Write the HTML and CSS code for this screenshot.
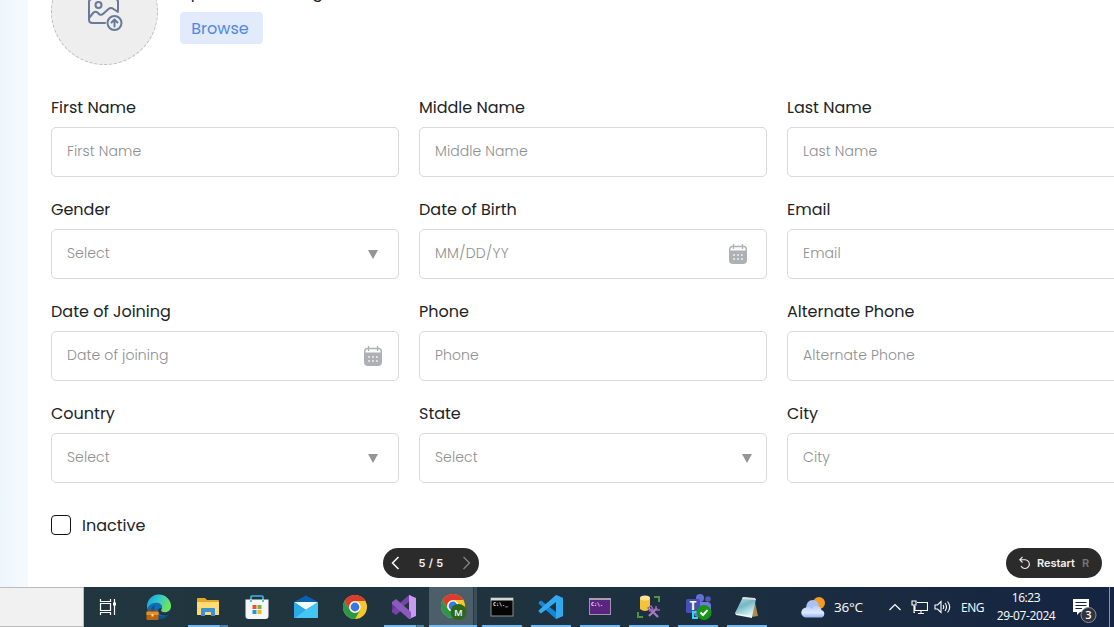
FILE: index.html
```html
<!DOCTYPE html>
<html lang="en">
<head>
<meta charset="utf-8">
<title>Employee form</title>
<link rel="stylesheet" href="styles.css">
</head>
<body>
<div class="screen">
  <div class="viewport">
    <aside class="rail"></aside>
    <main class="form">
      <section class="upload">
        <div class="avatar">
          <svg width="36" height="38" viewBox="0 0 36 38" fill="none" stroke="#69799b" stroke-width="2" stroke-linecap="round" stroke-linejoin="round">
            <path d="M18 30H5.500Q2 30 2 26.500V9Q2 6 5 6H28.500Q31 6 31 9V17.500"/>
            <circle cx="11.500" cy="12" r="3"/>
            <path d="M2 25L6.500 19.500Q8.500 18 10.500 19.500L12.500 21.500Q14.500 22.500 16.500 20.500L21.500 16Q24 14 26.500 16L31 19"/>
            <circle cx="27.500" cy="30" r="7"/>
            <path d="M27.500 33.500V27M24.500 29.500L27.500 26.500L30.500 29.500"/>
          </svg>
        </div>
        <div class="upload-info">
          <span class="upload-title">Upload User Image</span>
          <span class="browse">Browse</span>
        </div>
      </section>
      <section class="fields">
        <div class="field"><label>First Name</label><div class="box"><span>First Name</span></div></div>
        <div class="field"><label>Middle Name</label><div class="box"><span>Middle Name</span></div></div>
        <div class="field"><label>Last Name</label><div class="box"><span>Last Name</span></div></div>
        <div class="field"><label>Gender</label><div class="box"><span>Select</span><i class="caret"></i></div></div>
        <div class="field"><label>Date of Birth</label><div class="box"><span class="caps">MM/DD/YY</span><svg class="cal" viewBox="0 0 20 22"><use href="#calendar"/></svg></div></div>
        <div class="field"><label>Email</label><div class="box"><span>Email</span></div></div>
        <div class="field"><label>Date of Joining</label><div class="box wide-end"><span>Date of joining</span><svg class="cal" viewBox="0 0 20 22"><use href="#calendar"/></svg></div></div>
        <div class="field"><label>Phone</label><div class="box"><span>Phone</span></div></div>
        <div class="field"><label>Alternate Phone</label><div class="box"><span>Alternate Phone</span></div></div>
        <div class="field"><label>Country</label><div class="box"><span>Select</span><i class="caret"></i></div></div>
        <div class="field"><label>State</label><div class="box tight-end"><span>Select</span><i class="caret"></i></div></div>
        <div class="field"><label>City</label><div class="box"><span>City</span></div></div>
      </section>
      <div class="inactive"><span class="check"></span><label>Inactive</label></div>
    </main>
    <div class="pill pager">
      <svg width="10" height="14" viewBox="0 0 10 14" fill="none" stroke="#fff" stroke-width="1.5"><path d="M7.500 1L1.500 7L7.500 13"/></svg>
      <span>5 / 5</span>
      <svg width="10" height="14" viewBox="0 0 10 14" fill="none" stroke="#858585" stroke-width="1.300"><path d="M2.500 1L8.500 7L2.500 13"/></svg>
    </div>
    <div class="pill restart">
      <svg width="12" height="14" viewBox="0 0 12 14" fill="none" stroke="#eee" stroke-width="1.100"><path d="M3.500 1L.800 3.700L3.500 6.500M1 3.700H6.500A4.400 4.400 0 1 1 2 10"/></svg>
      <span>Restart</span><span class="key">R</span>
    </div>
  </div>

  <footer class="taskbar">
    <div class="start-box"></div>
    <div class="apps">
      <div class="app view"><svg width="18" height="18" viewBox="0 0 18 18" fill="none" stroke="#fff" stroke-width="1.200"><path d="M1.500 1V3.500H11.500V1M1.500 17V14.500H11.500V17M1.500 5.500H11.500V12.500H1.500ZM15.500 1V17"/><path d="M14 4.500H17V7.500H14Z" fill="#fff" stroke="none"/></svg></div>
      <div class="app"><svg width="26" height="26" viewBox="0 0 26 26">
        <defs><linearGradient id="edgeTop" x1="0" y1="0" x2="1" y2=".4"><stop stop-color="#159bdf"/><stop offset=".5" stop-color="#31c7ce"/><stop offset="1" stop-color="#70e35c"/></linearGradient></defs>
        <circle cx="13" cy="13" r="12" fill="#116bb5"/>
        <path d="M1 13A12 12 0 0 1 25 12C25 17 21 19 17 18Q14 17 16 14C17 10 12 8 8 9Q3 10 1 15Z" fill="url(#edgeTop)"/>
        <path d="M9 11Q6 16 11 20T22 21Q17 26 11 25Q4 22 5 16Q6 12 9 11Z" fill="#0b4f91"/>
        <path d="M16 14Q13 18 18 18.500T25 14Q25 18 22 21Q14 23 12 17Q12 14 16 14Z" fill="#20343d"/>
        <rect x="4" y="16" width="5" height="3" rx="1" fill="none" stroke="#8b4b0b"/>
        <rect x=".500" y="17" width="12" height="9" rx="1" fill="#b76512"/><path d="M.500 18H12.500V21H.500Z" fill="#dc932c"/><path d="M5.500 20H7.500V22.500H5.500Z" fill="#ffe088"/></svg></div>
      <div class="app open split"><svg width="24" height="22" viewBox="0 0 24 22"><path d="M1 3Q1 2 2 2H9L11 4H22Q23 4 23 5V19H1Z" fill="#e5a72b"/><path d="M1 6H23V18Q23 19 22 19H2Q1 19 1 18Z" fill="#ffdb75"/><path d="M5 20V13Q5 12 6 12H18Q19 12 19 13V20H15V16H9V20Z" fill="#3c91d0"/></svg></div>
      <div class="app"><svg width="24" height="24" viewBox="0 0 24 24"><path d="M6 6V2Q6 1 7 1H17Q18 1 18 2V6" fill="none" stroke="#35b8e8" stroke-width="1.700"/><path d="M.500 4.500H23.500V21Q23.500 24 20.500 24H3.500Q.500 24 .500 21Z" fill="#f5f6f7"/><path d="M6 5V7M18 5V7" stroke="#35b8e8" stroke-width="1.700"/><path d="M7.500 10H11.500V14H7.500Z" fill="#e95331"/><path d="M12.500 10H16.500V14H12.500Z" fill="#7ab82b"/><path d="M7.500 15H11.500V19H7.500Z" fill="#169ed9"/><path d="M12.500 15H16.500V19H12.500Z" fill="#f4b51d"/></svg></div>
      <div class="app"><svg width="26" height="24" viewBox="0 0 26 24"><path d="M1 7L13 .500L25 7V11H1Z" fill="#0b62aa"/><path d="M1 7H25L13 15Z" fill="#f2fbff"/><path d="M1 7L25 22Q25 23 24 23H2Q1 23 1 22Z" fill="#1a9be2"/><path d="M3 8H23L13 15Z" fill="#f2fbff"/><path d="M25 7L1 22Q1 23 2 23H24Q25 23 25 22Z" fill="#43c6f4"/><path d="M1 7L12.500 15L2 23Q1 23 1 22Z" fill="#2ba9e8"/></svg></div>
      <div class="app"><svg width="24" height="24" viewBox="0 0 24 24"><use href="#chrome"/></svg></div>
      <div class="app open split"><svg width="26" height="24" viewBox="0 0 26 24"><path d="M1 7L5 9V16L1 18Z" fill="#623689"/><path d="M1 17L5 20L20 7V0H18L1 15Z" fill="#7644a6"/><path d="M18 0L25 3V21L18 24Z" fill="#c59aef"/><path d="M18 7V17L11 12Z" fill="#233640"/><path d="M1 7L5 4L20 17V24H18L1 9Z" fill="#8c59be"/></svg></div>
      <div class="app open active"><svg width="28" height="28" viewBox="0 0 28 28"><svg x="1" y="1" width="24" height="24" viewBox="0 0 24 24"><use href="#chrome"/></svg><circle cx="18.500" cy="19" r="8" fill="#2b6819"/><text class="badge-m" x="18.500" y="22.500" text-anchor="middle">M</text></svg></div>
      <div class="app open"><svg width="24" height="20" viewBox="0 0 24 20"><rect x="1" y="1" width="22" height="18" fill="#050505" stroke="#8c9290"/><path d="M1 1H23V3.500H1Z" fill="#d5d8d8"/><text class="prompt" x="3" y="9">C:\._</text></svg></div>
      <div class="app open"><svg width="26" height="26" viewBox="0 0 26 26"><path d="M18 1L25 4V22L18 25L1 10Q0 9 1 8L3 6.500L18 18Z" fill="#1688d1"/><path d="M18 1L25 4V22L18 25V8L3 19.500L1 18Q0 17 1 16Z" fill="#32a9ef"/></svg></div>
      <div class="app open"><svg width="24" height="20" viewBox="0 0 24 20"><rect x="1.500" y="1.500" width="21" height="16" fill="#592581" stroke="#a194a9"/><path d="M1 1H23V3H1Z" fill="#a8a0ad"/><text class="prompt" x="3" y="9">C:\.</text></svg></div>
      <div class="app open"><svg width="26" height="26" viewBox="0 0 26 26"><path d="M4 4V15Q9 19 14 15V4Z" fill="#f6c338"/><ellipse cx="9" cy="4" rx="5" ry="2.500" fill="#ffe497"/><path d="M18 3H23V8M2 18V23H7" fill="none" stroke="#4d963f" stroke-width="2"/><path d="M13 22L21 14M14 15L22 23" stroke="#a879c5" stroke-width="2.300"/><path d="M12 14L15 12L17 15L14 17ZM20 12V16H24" fill="none" stroke="#9763b6" stroke-width="1.500"/></svg></div>
      <div class="app open"><svg width="28" height="28" viewBox="0 0 28 28"><circle cx="16" cy="5" r="4" fill="#6570d4"/><circle cx="24" cy="6" r="2.800" fill="#5159b4"/><rect x="10" y="9" width="17" height="15" rx="4" fill="#7179dc"/><rect x="2" y="6" width="14" height="14" rx="1.500" fill="#464eb7"/><text class="teams" x="9" y="17" text-anchor="middle">T</text><path d="M14 19H9V25H14" fill="none" stroke="#36d6ee" stroke-width="2"/><circle cx="20" cy="19.500" r="7.500" fill="#179518"/><path d="M16.500 19.500L19 22L23.500 17" fill="none" stroke="#fff" stroke-width="2"/></svg></div>
      <div class="app open"><svg width="26" height="24" viewBox="0 0 26 24"><defs><linearGradient id="note" x1="0" y1="0" x2=".5" y2="1"><stop stop-color="#b9e1e6"/><stop offset=".5" stop-color="#78b7c5"/><stop offset="1" stop-color="#d6f5f6"/></linearGradient></defs><path d="M20 3L24 21L17 22Z" fill="#ae8752"/><path d="M9 2L22 4L18 22L1 18Z" fill="url(#note)"/><path d="M9 2L21 3L22 5L8 4Z" fill="#d8dfdd"/><path d="M1 18L18 21V23L2 20Z" fill="#edf7f6"/></svg></div>
    </div>
    <div class="tray">
      <svg class="weather" width="26" height="24" viewBox="0 0 26 24"><defs><linearGradient id="cloud" x1="0" y1="0" x2="0" y2="1"><stop stop-color="#b9cdfa"/><stop offset=".6" stop-color="#dfe8ff"/><stop offset="1" stop-color="#8fb2ef"/></linearGradient></defs><circle cx="18" cy="8" r="6" fill="#f49b20"/><path d="M5 14Q5 5 12 5Q17 5 18 11L12 18H5Z" fill="#a9c1f3"/><path d="M5.500 22.500A5 5 0 0 1 5 12.500Q8 11 11 14Q13 10 17 11Q20 12 20.500 15A4 4 0 0 1 21 22.500Z" fill="url(#cloud)"/></svg>
      <span class="temp">36°C</span>
      <svg class="chev" width="12" height="8" viewBox="0 0 12 8" fill="none" stroke="#fff" stroke-width="1.200"><path d="M.500 7L6 1.500L11.500 7"/></svg>
      <svg class="net" width="17" height="15" viewBox="0 0 17 15" fill="none" stroke="#fff" stroke-width="1.100"><path d="M6 2.500H16.500V10.500H4V6M7 13.500H13M10 10.500V13.500M1 1H5V5H1ZM3 5V12.500H4"/></svg>
      <svg class="vol" width="18" height="14" viewBox="0 0 18 14" fill="none" stroke="#fff" stroke-width="1.100"><path d="M1 5H3.500L7 1.500V12.500L3.500 9H1ZM9 5Q10.500 7 9 9M11 3Q14 7 11 11M13.500 1.500Q18 7 13.500 12.500"/></svg>
      <span class="lang">ENG</span>
      <div class="clock"><span>16:23</span><span class="date">29-07-2024</span></div>
      <svg class="notice" width="26" height="26" viewBox="0 0 26 26"><path d="M1 1H17V14H8L5 17V14H1Z" fill="#fff"/><path d="M3.500 4.500H14.500M3.500 7.500H14.500M3.500 10.500H10" stroke="#17243d" stroke-width="1.100"/><circle cx="16.500" cy="17" r="7.500" fill="#31343e" stroke="#8b909a"/><text class="count" x="16.500" y="21" text-anchor="middle">3</text></svg>
      <span class="edge"></span>
    </div>
  </footer>
</div>

<svg class="symbols" aria-hidden="true">
  <symbol id="calendar" viewBox="0 0 20 22">
    <path d="M1.700 8V6.500Q1.700 3.500 4.500 3.500H15.500Q18.300 3.500 18.300 6.500V8" fill="none" stroke="#adb0b4" stroke-width="1.400"/>
    <path d="M5.500 1V6M14.500 1V6" stroke="#adb0b4" stroke-width="1.300"/>
    <path d="M1 7.500H19V17Q19 21 15 21H5Q1 21 1 17Z" fill="#adb0b4"/>
    <path d="M5.300 12H6.900M9.200 12H10.800M13.100 12H14.700M5.300 16H6.900M9.200 16H10.800M13.100 16H14.700" stroke="#fff" stroke-width="1.600"/>
  </symbol>
  <symbol id="chrome" viewBox="0 0 24 24">
    <circle cx="12" cy="12" r="12" fill="#f7c928"/>
    <path d="M1.600 6A12 12 0 0 1 22.400 6H12A6 6 0 0 0 6.800 15Z" fill="#dc3b2e"/>
    <path d="M1.600 6A12 12 0 0 0 12 24L17.200 15A6 6 0 0 1 6.800 15Z" fill="#299849"/>
    <circle cx="12" cy="12" r="5.700" fill="#fff"/><circle cx="12" cy="12" r="4.400" fill="#3978df"/>
  </symbol>
</svg>
</body>
</html>
```

FILE: styles.css
```css
* { box-sizing: border-box; }
body { margin: 0; overflow: hidden; background: #fff; }
.screen { width: 1114px; height: 627px; display: flex; flex-direction: column; overflow: hidden; }
.viewport {
  position: relative; height: 587px; display: flex; overflow: hidden;
  font-family: Poppins, Inter, sans-serif; color: #202326;
}
.rail { width: 28px; flex: none; background: linear-gradient(90deg, #edf6fb, #f3f9fd 60%); }
.form { flex: none; width: 1130px; padding-left: 23px; margin-top: -42px; }

.upload { display: flex; gap: 22px; height: 107px; }
.avatar {
  width: 107px; height: 107px; flex: none; border-radius: 50%;
  background: #eee; border: 1px dashed #bbb;
  display: flex; align-items: center; justify-content: center;
}
.upload-info { display: flex; flex-direction: column; align-items: flex-start; gap: 7px; padding-top: 23px; }
.upload-title { font-size: 16px; line-height: 24px; white-space: nowrap; }
.browse {
  width: 83px; height: 32px; border-radius: 4px; background: #e2ebfb; color: #5088e8;
  font-size: 16px; line-height: 34px; text-align: center; padding-right: 3px;
}

.fields { display: grid; grid-template-columns: repeat(3, 348px); gap: 20px; margin-top: 30px; }
.field { display: flex; flex-direction: column; gap: 7px; }
.field label { padding-top: 1px; }
.field label, .inactive label { font-size: 16px; line-height: 24px; }
.box {
  height: 50px; border: 1px solid #d9d9db; border-radius: 5px; padding: 0 20px 2px 15px;
  display: flex; align-items: center; justify-content: space-between;
  font-size: 14px; font-weight: 300; letter-spacing: .1px; color: #8d8e90;
}
.caps { letter-spacing: .3px; }
.wide-end { padding-right: 15px; }
.tight-end { padding-right: 14px; }
.cal { width: 20px; height: 22px; margin-top: 2px; }
.field:nth-child(5) .cal { margin-right: -2px; }
.caret {
  width: 10px; height: 9px; margin-top: 3px; background: #939596;
  clip-path: polygon(0 0, 100% 0, 50% 100%);
}
.inactive { display: flex; align-items: center; gap: 11px; margin-top: 30px; }
.inactive label { padding-top: 1px; margin-bottom: -1px; }
.check { width: 20px; height: 20px; border: 1px solid #111; border-radius: 4px; }

.pill {
  position: absolute; top: 548px; height: 30px; width: 96px; border-radius: 15px; background: #2b2b2b;
  color: #f3f3f3; display: flex; align-items: center; font: 600 11px/30px Inter, sans-serif;
}
.pager { left: 383px; padding: 0 8px; justify-content: space-between; letter-spacing: .3px; }
.restart { left: 1006px; padding-left: 13px; }
.restart span { margin-left: 6px; letter-spacing: -.05px; }
.restart .key { margin-left: 7px; color: #777; }

.taskbar {
  height: 40px; display: flex; background: linear-gradient(90deg, #22363f, #20343f 40%, #1b2d40 70%, #152442);
  color: #fff; font-family: "Segoe UI", "Open Sans", sans-serif;
}
.start-box { width: 84px; flex: none; background: #f1f1f1; border: 1px solid #bbb; border-width: 1px 1px 1px 0; }
.apps { width: 691px; flex: none; display: flex; gap: 9px; padding-left: 4px; }
.app { width: 40px; height: 40px; flex: none; display: flex; align-items: center; justify-content: center; }
.view { margin-right: 2px; }
.open { border-bottom: 2px solid #73b8ed; padding-top: 2px; }
.split { border-image: linear-gradient(90deg, #73b8ed 31px, #3b6684 31px, #3b6684 32px, #4d83ac 32px) 1; border-width: 0 0 2px; }
.active {
  width: 48px; margin: 0 -4px; padding-left: 2px;
  background: linear-gradient(90deg, #4b5e69 44px, #263b46 44px, #263b46 45px, #3a4e59 45px);
}
.badge-m { font: 600 9px "Open Sans", sans-serif; fill: #fff; }
.prompt { font: 700 5px "DejaVu Sans Mono", monospace; fill: #fff; }
.teams { font: 700 12px "Open Sans", sans-serif; fill: #fff; }

.tray { flex: 1; display: flex; align-items: center; padding-left: 26px; }
.tray > * { flex: none; }
.weather { margin-top: -1px; }
.temp { width: 30px; margin-left: 7px; font-size: 13.5px; letter-spacing: -.2px; white-space: nowrap; }
.chev { margin-left: 25px; }
.net { margin-left: 10px; }
.vol { margin-left: 6px; }
.lang { width: 24px; margin-left: 9px; font-size: 12px; letter-spacing: -.5px; }
.clock { width: 60px; margin-left: 11px; display: flex; flex-direction: column; align-items: center; font-size: 12px; line-height: 18px; letter-spacing: -.4px; }
.notice { margin-left: 16px; margin-top: 7px; }
.count { font: 600 11px "Open Sans", sans-serif; fill: #fff; }
.edge { width: 1px; height: 40px; margin-left: 11px; background: #8792a2; }
.symbols { display: none; }
```
